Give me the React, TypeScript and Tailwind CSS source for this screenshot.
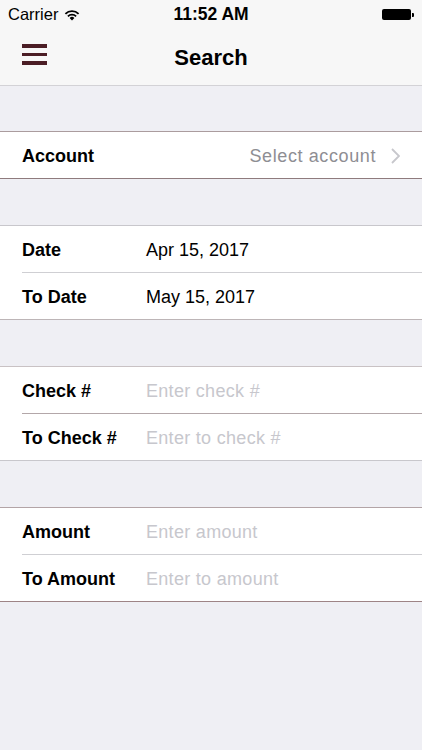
import React from "react";

type Row = { label: string; value?: string; placeholder?: string; line?: string };
type Section = { edges: string; rows: Row[] };

const sections: Section[] = [
  {
    edges: "border-t-[#c8c7cc] border-b-[#bdb5b7]",
    rows: [
      { label: "Date", value: "Apr 15, 2017" },
      { label: "To Date", value: "May 15, 2017", line: "border-[#cfcfd3]" },
    ],
  },
  {
    edges: "border-t-[#c9c2c4] border-b-[#c8c7cc]",
    rows: [
      { label: "Check #", placeholder: "Enter check #" },
      { label: "To Check #", placeholder: "Enter to check #", line: "border-[#b3a7a9]" },
    ],
  },
  {
    edges: "border-t-[#b3a4a6] border-b-[#9e8486]",
    rows: [
      { label: "Amount", placeholder: "Enter amount" },
      { label: "To Amount", placeholder: "Enter to amount", line: "border-[#cfcfd3]" },
    ],
  },
];

function StatusBar() {
  return (
    <div className="relative flex h-[29px] items-center justify-between pl-[8px] pr-[8px] text-black">
      <div className="flex items-center gap-[6px] text-[16.5px]">
        <span>Carrier</span>
        <svg width="16" height="12" viewBox="0 0 16 12">
          <path d="M8 11.5 L5.6 9 A3.4 3.4 0 0 1 10.4 9 Z" fill="#000" />
          <path d="M3.9 7.3 A5.8 5.8 0 0 1 12.1 7.3" stroke="#000" strokeWidth="1.8" fill="none" />
          <path d="M1.4 4.8 A9.3 9.3 0 0 1 14.6 4.8" stroke="#000" strokeWidth="1.8" fill="none" />
        </svg>
      </div>
      <span className="absolute left-1/2 -translate-x-1/2 text-[17.5px] font-bold">11:52 AM</span>
      <div className="flex items-center">
        <div className="h-[11px] w-[29px] rounded-[2px] bg-black" />
        <div className="ml-[1px] h-[4px] w-[2px] rounded-r-[1px] bg-black" />
      </div>
    </div>
  );
}

function NavBar() {
  return (
    <div className="relative flex h-[57px] items-center justify-center border-b border-[#d3d2d6]">
      <div className="absolute left-[22px] top-[15px] flex w-[25px] flex-col gap-[5px]">
        <span className="h-[3.5px] bg-[#4b1d25]" />
        <span className="h-[3.5px] bg-[#4b1d25]" />
        <span className="h-[3.5px] bg-[#4b1d25]" />
      </div>
      <h1 className="text-[22px] font-bold text-black">Search</h1>
    </div>
  );
}

function FieldRow({ row, first }: { row: Row; first: boolean }) {
  return (
    <div className="pl-[22px]">
      <div
        className={
          first ? "flex h-[46px] items-center pt-[2px]" : `flex h-[47px] items-center border-t pt-[2px] ${row.line}`
        }
      >
        <span className="w-[124px] text-[18px] font-bold text-black">{row.label}</span>
        {row.value ? (
          <span className="text-[18px] text-black">{row.value}</span>
        ) : (
          <span className="text-[18px] tracking-[0.3px] text-[#c7c7cd]">{row.placeholder}</span>
        )}
      </div>
    </div>
  );
}

export default function App() {
  return (
    <div
      className="min-h-[750px] w-[422px] bg-[#efeff4]"
      style={{ fontFamily: '"Liberation Sans", Arial, sans-serif' }}
    >
      <div className="bg-[#f7f7f7]">
        <StatusBar />
        <NavBar />
      </div>

      {/* Account picker */}
      <div className="mt-[45px] border-y border-t-[#ab9c9e] border-b-[#8f7b7d] bg-white">
        <div className="flex h-[46px] items-center pl-[22px] pr-[22px] pt-[2px]">
          <span className="text-[18px] font-bold text-black">Account</span>
          <span className="ml-auto text-[18px] tracking-[0.6px] text-[#8e8e93]">Select account</span>
          <svg className="ml-[15px]" width="9" height="16" viewBox="0 0 9 16">
            <path d="M1 1 L8 8 L1 15" stroke="#c7c7cc" strokeWidth="1.8" fill="none" />
          </svg>
        </div>
      </div>

      {sections.map((s, i) => (
        <div key={i} className={`mt-[46px] border-y bg-white ${s.edges}`}>
          {s.rows.map((r, j) => (
            <FieldRow key={r.label} row={r} first={j === 0} />
          ))}
        </div>
      ))}
    </div>
  );
}
